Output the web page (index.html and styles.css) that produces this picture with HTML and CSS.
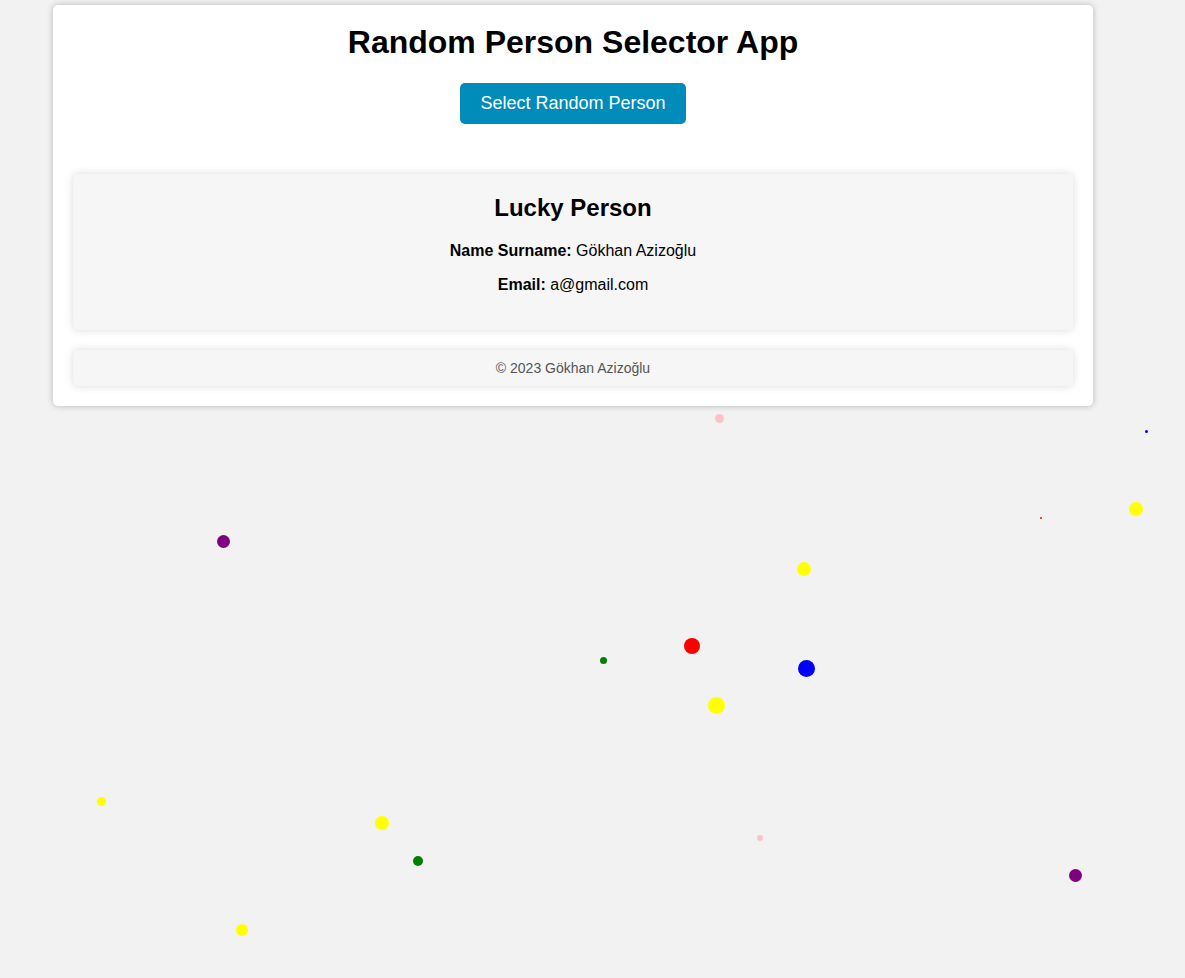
FILE: index.html
```html
<!DOCTYPE html>
<html lang="en">
<head>
<meta charset="UTF-8">
<title>Random Person Selector App</title>
<link rel="stylesheet" href="styles.css">
</head>
<body>
<div class="container">
  <h1 class="title">Random Person Selector App</h1>
  <div class="actions">
    <button class="select-btn" type="button">Select Random Person</button>
  </div>
  <div class="card result">
    <h2 class="result-title">Lucky Person</h2>
    <p class="result-line"><strong>Name Surname:</strong> Gökhan Azizoğlu</p>
    <p class="result-line"><strong>Email:</strong> a@gmail.com</p>
  </div>
  <footer class="card footer">© 2023 Gökhan Azizoğlu</footer>
</div>
<div class="confetti">
  <span class="dot pink" style="left:714.5px;top:413.5px;width:9px;height:9px"></span>
  <span class="dot blue" style="left:1145px;top:430px;width:3px;height:3px"></span>
  <span class="dot red" style="left:1040px;top:517px;width:2px;height:2px"></span>
  <span class="dot yellow" style="left:1128.5px;top:501.5px;width:14px;height:14px"></span>
  <span class="dot purple" style="left:216.5px;top:534.5px;width:13px;height:13px"></span>
  <span class="dot yellow" style="left:796.5px;top:561.5px;width:14px;height:14px"></span>
  <span class="dot green" style="left:599.5px;top:656.5px;width:7px;height:7px"></span>
  <span class="dot red" style="left:684px;top:638px;width:16px;height:16px"></span>
  <span class="dot blue" style="left:798px;top:660px;width:17px;height:17px"></span>
  <span class="dot yellow" style="left:708px;top:697px;width:17px;height:17px"></span>
  <span class="dot yellow" style="left:97px;top:797px;width:9px;height:9px"></span>
  <span class="dot yellow" style="left:375px;top:816px;width:14px;height:14px"></span>
  <span class="dot pink" style="left:757px;top:835px;width:6px;height:6px"></span>
  <span class="dot green" style="left:413px;top:856px;width:10px;height:10px"></span>
  <span class="dot purple" style="left:1068.5px;top:868.5px;width:13px;height:13px"></span>
  <span class="dot yellow" style="left:236px;top:924px;width:12px;height:12px"></span>
</div>
</body>
</html>
```

FILE: styles.css
```css
html, body {
  margin: 0;
  padding: 0;
}

body {
  background: #f2f2f2;
  font-family: "Liberation Sans", Arial, sans-serif;
  color: #000;
  min-height: 978px;
  position: relative;
  padding-top: 5px;
  box-sizing: border-box;
}

.container {
  width: 1000px;
  margin-left: 53px;
  padding: 19px 20px 20px;
  background: #fff;
  border-radius: 5px;
  box-shadow: 0 0 6px rgba(0, 0, 0, 0.25);
}

.title {
  margin: 0 0 22px;
  font-size: 32px;
  font-weight: bold;
  text-align: center;
}

.actions {
  display: flex;
  justify-content: center;
  margin-bottom: 50px;
}

.select-btn {
  background: #008cba;
  color: #fff;
  border: none;
  border-radius: 5px;
  padding: 10px 20px;
  font-family: "Liberation Sans", Arial, sans-serif;
  font-size: 18px;
  line-height: normal;
  cursor: pointer;
}

.card {
  background: #f6f6f6;
  border-radius: 5px;
  box-shadow: 0 0 8px rgba(0, 0, 0, 0.15);
}

.result {
  padding: 20px;
  text-align: center;
}

.result-title {
  margin: 0 0 20px;
  font-size: 24px;
  font-weight: bold;
}

.result-line {
  margin: 0 0 16px;
  font-size: 16px;
}

.footer {
  display: block;
  margin-top: 20px;
  padding: 10px;
  text-align: center;
  font-size: 14px;
  color: #555;
}

.confetti {
  position: absolute;
  inset: 0;
  pointer-events: none;
}

.dot {
  position: absolute;
  border-radius: 50%;
}

.red { background: #ff0000; }
.blue { background: #0000ff; }
.yellow { background: #ffff00; }
.green { background: #008000; }
.purple { background: #800080; }
.pink { background: #ffc0cb; }
```
